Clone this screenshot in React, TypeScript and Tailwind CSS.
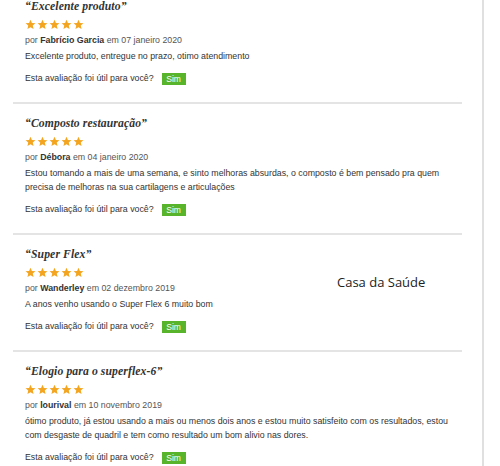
import React from "react";

type Review = { title: string; name: string; date: string; body: string };

const reviews: Review[] = [
  {
    title: "Excelente produto",
    name: "Fabrício Garcia",
    date: "07 janeiro 2020",
    body: "Excelente produto, entregue no prazo, otimo atendimento",
  },
  {
    title: "Composto restauração",
    name: "Débora",
    date: "04 janeiro 2020",
    body: "Estou tomando a mais de uma semana, e sinto melhoras absurdas, o composto é bem pensado pra quem precisa de melhoras na sua cartilagens e articulações",
  },
  {
    title: "Super Flex",
    name: "Wanderley",
    date: "02 dezembro 2019",
    body: "A anos venho usando o Super Flex 6 muito bom",
  },
  {
    title: "Elogio para o superflex-6",
    name: "lourival",
    date: "10 novembro 2019",
    body: "ótimo produto, já estou usando a mais ou menos dois anos e estou muito satisfeito com os resultados, estou com desgaste de quadril e tem como resultado um bom alivio nas dores.",
  },
];

function Star() {
  return (
    <svg width="11" height="11" viewBox="0 0 24 24" className="block">
      <path
        d="M12 1.5l3.1 7.1 7.7.6-5.9 5.1 1.8 7.6L12 17.8l-6.7 4.1 1.8-7.6-5.9-5.1 7.7-.6z"
        fill="#f3a51f"
      />
    </svg>
  );
}

function ReviewBlock({ r }: { r: Review }) {
  return (
    <div className="pl-[12px]">
      <h3
        className="h-[16px] leading-[16px] text-[11.7px] italic font-bold tracking-[0.1px] text-[#333]"
        style={{ fontFamily: '"Liberation Serif", serif' }}
      >
        “{r.title}”
      </h3>
      <div className="mt-[1px] h-[16px] flex items-center gap-[1px]">
        <Star />
        <Star />
        <Star />
        <Star />
        <Star />
      </div>
      <p className="h-[16px] leading-[16px] text-[8.8px] text-[#555]">
        por <span className="font-bold text-[#333]">{r.name}</span> em {r.date}
      </p>
      <p className="mt-[1px] leading-[14px] text-[8.8px] text-[#333]">{r.body}</p>
      <div className="mt-[8px] h-[16px] flex items-center text-[8.8px] text-[#333]">
        <span>Esta avaliação foi útil para você?</span>
        <span className="ml-[8px] w-[24px] h-[12px] flex items-center justify-center bg-[#58b42a] text-white text-[8.5px] leading-none">
          Sim
        </span>
      </div>
    </div>
  );
}

export default function App() {
  return (
    <div
      className="w-[500px] h-[466px] overflow-hidden bg-white flex"
      style={{ fontFamily: '"Liberation Sans", Arial, sans-serif' }}
    >
      <div className="relative w-[482px] pl-[13px] -mt-[1px]">
        <div className="w-[449px]">
          {reviews.map((r, i) => (
            <div key={i}>
              <ReviewBlock r={r} />
              {i < reviews.length - 1 && (
                <div className="mt-[15px] mb-[12px] h-[2px] bg-[#e4e4e4]" />
              )}
            </div>
          ))}
        </div>
        <div
          className="absolute left-[337px] top-[274px] text-[13px] leading-[18px] text-[#222]"
          style={{ fontFamily: '"Open Sans", sans-serif' }}
        >
          Casa da Saúde
        </div>
      </div>
      <div className="w-[2px] bg-[#e0e0e0]" />
      <div className="flex-1 bg-white" />
    </div>
  );
}
